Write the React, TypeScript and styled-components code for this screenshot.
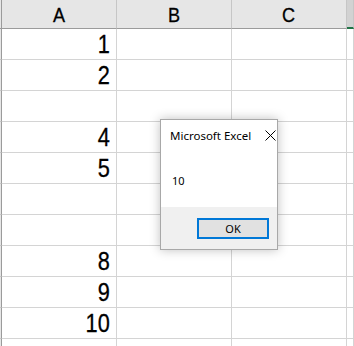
import React from "react";
import styled, { createGlobalStyle } from "styled-components";

const Global = createGlobalStyle`
  html, body { margin: 0; padding: 0; background: #ffffff; overflow: hidden; }
  body { width: 354px; height: 346px; position: relative; }
`;

const GRID = "#d4d4d4";
const HEAD_BG = "#e6e6e6";
const HEAD_LINE = "#9b9b9b";

const Sheet = styled.div`
  display: grid;
  grid-template-columns: 2px 115px 115px 115px 1fr;
  grid-auto-rows: 31px;
  grid-template-rows: 29px;
  width: 354px;
  height: 346px;
  overflow: hidden;
  font-family: "Liberation Sans", Arial, sans-serif;
`;

const Corner = styled.div<{ $head?: boolean }>`
  box-sizing: border-box;
  background: ${HEAD_BG};
  border-right: 1px solid ${HEAD_LINE};
  border-bottom: 1px solid ${(p) => (p.$head ? HEAD_LINE : "#c8c8c8")};
`;

const ColHead = styled.div<{ $selected?: boolean }>`
  box-sizing: border-box;
  background: ${(p) => (p.$selected ? "#d2d2d2" : HEAD_BG)};
  border-right: 1px solid #c6c6c6;
  border-bottom: ${(p) => (p.$selected ? "2px solid #217346" : `1px solid ${HEAD_LINE}`)};
  display: flex;
  align-items: center;
  justify-content: center;
  font-size: 21px;
  color: #000;
  padding-top: 1px;
`;

const Narrow = styled.span`
  display: inline-block;
  transform: scaleX(0.86);
  -webkit-text-stroke: 0.3px #000;
`;

const Cell = styled.div`
  box-sizing: border-box;
  border-right: 1px solid ${GRID};
  border-bottom: 1px solid ${GRID};
  display: flex;
  align-items: flex-end;
  justify-content: flex-end;
  padding: 0 6px 0px 0;
  font-size: 25px;
  line-height: 29px;
  color: #000;
`;

const Num = styled.span`
  display: inline-block;
  transform: scaleX(0.87);
  transform-origin: right center;
  -webkit-text-stroke: 0.3px #000;
`;

const Dialog = styled.div`
  position: absolute;
  left: 160px;
  top: 119px;
  width: 118px;
  height: 131px;
  box-sizing: border-box;
  background: #ffffff;
  border: 1px solid #a8a8a8;
  box-shadow: 0 0 10px rgba(0, 0, 0, 0.25);
  display: flex;
  flex-direction: column;
  font-family: "Noto Sans", "Open Sans", sans-serif;
`;

const TitleBar = styled.div`
  display: flex;
  align-items: center;
  height: 30px;
  padding: 0 1px 0 9px;
`;

const Title = styled.span`
  flex: 1;
  font-size: 11.5px;
  color: #000;
  white-space: nowrap;
  padding-top: 1px;
`;

const Close = styled.div`
  width: 11px;
  height: 11px;
  display: flex;
  margin-top: 1px;
`;

const Message = styled.div`
  flex: 1;
  padding: 23px 0 0 11px;
  font-size: 11px;
  color: #000;
`;

const Footer = styled.div`
  height: 42px;
  background: #f0f0f0;
  display: flex;
  align-items: flex-start;
  justify-content: flex-end;
  padding: 11px 8px 0 0;
  box-sizing: border-box;
`;

const OkButton = styled.button`
  width: 72px;
  height: 21px;
  box-sizing: border-box;
  border: 2px solid #0078d7;
  background: #e1e1e1;
  font-family: "Noto Sans", "Open Sans", sans-serif;
  font-size: 11px;
  color: #000;
  padding: 0;
  display: flex;
  align-items: center;
  justify-content: center;
`;

const rows = ["1", "2", "", "4", "5", "", "", "8", "9", "10", ""];

export default function App() {
  return (
    <>
      <Global />
      <Sheet>
        <Corner $head />
        <ColHead><Narrow>A</Narrow></ColHead>
        <ColHead><Narrow>B</Narrow></ColHead>
        <ColHead><Narrow>C</Narrow></ColHead>
        <ColHead $selected />
        {rows.map((v, i) => (
          <React.Fragment key={i}>
            <Corner />
            <Cell>{v && <Num>{v}</Num>}</Cell>
            <Cell />
            <Cell />
            <Cell />
          </React.Fragment>
        ))}
      </Sheet>
      <Dialog>
        <TitleBar>
          <Title>Microsoft Excel</Title>
          <Close>
            <svg width="11" height="11" viewBox="0 0 11 11">
              <path d="M0.5 0.5 L10.5 10.5 M10.5 0.5 L0.5 10.5" stroke="#000" strokeWidth="1" fill="none" />
            </svg>
          </Close>
        </TitleBar>
        <Message>10</Message>
        <Footer>
          <OkButton>OK</OkButton>
        </Footer>
      </Dialog>
    </>
  );
}
